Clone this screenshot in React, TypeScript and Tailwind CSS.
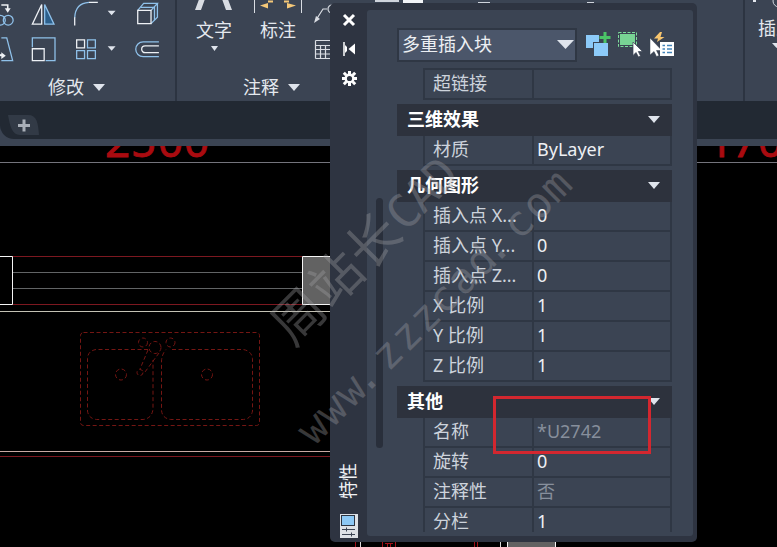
import type { ReactNode } from 'react'
import clsx from 'clsx'

interface Property {
  label: string
  value: string
  readOnly?: boolean
}

interface Section {
  title: string
  rows: Property[]
}

const sections: Section[] = [
  { title: '三维效果', rows: [{ label: '材质', value: 'ByLayer' }] },
  {
    title: '几何图形',
    rows: [
      { label: '插入点 X...', value: '0' },
      { label: '插入点 Y...', value: '0' },
      { label: '插入点 Z...', value: '0' },
      { label: 'X 比例', value: '1' },
      { label: 'Y 比例', value: '1' },
      { label: 'Z 比例', value: '1' },
    ],
  },
  {
    title: '其他',
    rows: [
      { label: '名称', value: '*U2742', readOnly: true },
      { label: '旋转', value: '0' },
      { label: '注释性', value: '否', readOnly: true },
      { label: '分栏', value: '1' },
    ],
  },
]

function Caret({ className }: { className?: string }) {
  return (
    <svg viewBox="0 0 12 7" preserveAspectRatio="none" className={clsx('shrink-0', className)}>
      <path d="M0 0H12L6 7Z" fill="#dfe4ec" />
    </svg>
  )
}

function PanelTitle({ children }: { children: ReactNode }) {
  return (
    <div className="flex h-7 items-center gap-[9px] text-[18px] text-[#e4e8ee]">
      {children}
      <Caret className="h-[7px] w-3" />
    </div>
  )
}

function ModifyTools() {
  return (
    <svg width="175" height="66" viewBox="0 0 175 66" fill="none" stroke="#8fc1ea" strokeWidth="1.3">
      {/* copy */}
      <circle cx="-1" cy="20.5" r="5" />
      <circle cx="7" cy="20.5" r="5" />
      <path d="M0 5h6.5v5" stroke="#eef1f5" strokeWidth="1.6" />
      <path d="M3.5 8.5h6l-3 4.5z" fill="#eef1f5" stroke="none" />
      {/* mirror */}
      <path d="M41 4.500V24.500H31.500Z" stroke="#eef1f5" />
      <path d="M44 4.500V24.500H53.500Z" fill="#2c5f8b" />
      {/* fillet */}
      <path d="M74.500 18C75 8 80 3 89 2.500" />
      <path d="M89 2.500H98M74.500 17.500V26" stroke="#eef1f5" />
      <path d="M108 11h8l-4 4.500zM108 47h8l-4 4.500z" fill="#dfe4ec" stroke="none" />
      {/* explode */}
      <path d="M138.500 10.500L144.500 3.500H158.500L152 10.500M158.500 3.500V17.500L152 24" />
      <path d="M141.500 7.500H155.500V20.500" />
      <path d="M138.500 10.500H152V24H138.500Z" stroke="#eef1f5" />
      {/* stretch */}
      <path d="M0 38.500H5.500L11.500 61.500H0" />
      <path d="M-2 56h4" stroke="#eef1f5" strokeWidth="2" />
      <path d="M0 53v7l4.500-3.500z" fill="#eef1f5" stroke="none" />
      {/* scale */}
      <path d="M31.500 48V38.500H54.500V61.500H45" />
      <path d="M31.500 49.500H43.500V61.500H31.500Z" stroke="#eef1f5" />
      {/* array */}
      <path d="M76.500 40.500H84.500V48.500H76.500Z" stroke="#eef1f5" />
      <path d="M87.500 40.500H95.500V48.500H87.500ZM76.500 51.500H84.500V59.500H76.500ZM87.500 51.500H95.500V59.500H87.500Z" />
      {/* offset */}
      <path d="M160 42.500H144a7.500 7.500 0 0 0 0 15H160" />
      <path d="M160 46.500H146a3.500 3.500 0 0 0 0 7H160" stroke="#eef1f5" />
    </svg>
  )
}

function Ribbon() {
  return (
    <div className="flex h-[101px] overflow-hidden bg-[#3b4453]">
      <div className="flex w-[175px] shrink-0 flex-col">
        <ModifyTools />
        <div className="mt-2 pl-12">
          <PanelTitle>修改</PanelTitle>
        </div>
      </div>
      <div className="w-[2px] shrink-0 bg-[#2c3441]" />
      <div className="flex w-[190px] shrink-0 flex-col pl-[19px]">
        <div className="flex h-[74px]">
          <div className="flex w-9 flex-col items-center text-[18px] text-[#e4e8ee]">
            <svg width="40" height="12" className="shrink-0">
              <path d="M1 10L7 -6H32L38 10H32L28 -1H11L7 10Z" fill="#d9dde3" />
              <path d="M11 -1H28L25 -9H14Z" fill="#d9dde3" />
            </svg>
            <span className="-mx-2 mt-1 leading-7">文字</span>
            <Caret className="mt-0.5 h-[5px] w-[7px]" />
          </div>
          <div className="ml-7 flex w-9 flex-col items-center text-[18px] text-[#e4e8ee]">
            <svg width="50" height="14" className="shrink-0">
              <path d="M1.500 0V13M48.500 0V13" stroke="#d9dde3" />
              <path d="M7 5.500L15 3V8.500ZM43 5.500L34 3V8.500Z" fill="#f5c878" />
              <path d="M15 1.500h5M31 1.500h5" stroke="#f5c878" strokeWidth="2" />
            </svg>
            <span className="mt-0.5 leading-7">标注</span>
          </div>
          <svg width="20" height="66" className="ml-[18px]" fill="none" stroke="#d9dde3" strokeWidth="1.200">
            <path d="M2 20L9 9H13" />
            <circle cx="18" cy="9" r="4" />
            <path d="M0 23l2-7 4 3z" fill="#d9dde3" stroke="none" />
            <path d="M1.500 40.500H20M1.500 45.500H20M1.500 49.500H20M1.500 54H20M1.500 58.500H20M1.500 40.500V58.500M6.500 45.500V58.500M11.500 45.500V58.500" />
          </svg>
        </div>
        <div className="pl-[47px]">
          <PanelTitle>注释</PanelTitle>
        </div>
      </div>
      <div className="flex flex-1">
        <svg width="230" height="8">
          <rect x="8" width="24" height="2" fill="#cfd4dc" />
          <rect x="36" width="20" height="3" fill="#f2f4f7" />
          <path d="M111 2.500H123M220 2.500H227" stroke="#cfd4dc" />
        </svg>
      </div>
      <div className="w-[2px] shrink-0 bg-[#2c3441]" />
      <div className="flex w-[32px] shrink-0 flex-col pl-[13px] text-[18px] text-[#e4e8ee]">
        <svg width="18" height="14" className="-ml-[6px] shrink-0 overflow-visible">
          <rect x="1" width="3" height="2" fill="#e4e8ee" />
          <circle cx="27" cy="1" r="6" fill="none" stroke="#cfd4dc" />
        </svg>
        <span className="w-9 leading-7">插入</span>
        <Caret className="ml-[14px] mt-px h-[5px] w-[9px]" />
      </div>
    </div>
  )
}

function FileTabs() {
  return (
    <div className="h-[45px] bg-[#3b4453]">
      <div className="flex h-[38px] items-center rounded-bl-[14px] bg-[#222933] pl-2">
        <svg width="32" height="22" className="mt-[9px]">
          <path d="M0 1H20C29 1 30 9 31 21H12C4 21 2 12 0 1Z" fill="#323a46" />
          <path d="M10 11.500H22M16 5.500V17.500" stroke="#a9afb8" strokeWidth="3" />
        </svg>
      </div>
    </div>
  )
}

function Drawing() {
  return (
    <svg width="777" height="401" viewBox="0 146 777 401" className="block bg-black" fill="none">
      <g fill="#a90b10" stroke="#a90b10" strokeWidth="0.8" fontSize="44" fontFamily="'Noto Sans', sans-serif">
        <text x="105 131 158 184" y="157">2500</text>
        <text x="708 732 758" y="157">170</text>
      </g>
      <path d="M0 162.500H777" stroke="#74747c" />

      {/* window in the wall */}
      <path d="M12 256.500H302M12 304.500H302M0 456.500H330" stroke="#7c1820" />
      <path d="M12 272.500H302M12 288.500H302" stroke="#626466" />
      <path d="M0 256.500H12.500V304.500H0" stroke="#f5f5f5" />
      <path d="M340 256.500H302.500V304.500H340" fill="#626262" stroke="#f5f5f5" />
      <path d="M0 311.500H330" stroke="#c3c1b4" />
      <path d="M0 451.500H330" stroke="#c9a9a4" />

      {/* sink */}
      <g stroke="#741613" strokeDasharray="4 2.500">
        <rect x="80.500" y="332.500" width="179" height="93" rx="3" />
        <path d="M148 349.500H96Q87.500 351 87.500 359V411Q88.500 418.500 96.500 419.500H143Q152 418.500 153 409V360" />
        <path d="M172 349.500H243Q252.500 351 252.500 360V411Q251 419.500 242 419.500H171Q162 418.500 161.500 410V361Q162 354 166 349.500" />
        <circle cx="121" cy="374.500" r="5.500" />
        <circle cx="207" cy="374.500" r="5.500" />
        <circle cx="143" cy="342.500" r="4.500" />
        <circle cx="170.500" cy="342.500" r="4.500" />
        <circle cx="155" cy="347.500" r="6" />
        <circle cx="140" cy="372.500" r="3" />
        <path d="M148 350L140 369M159 353L145 372" />
      </g>

      {/* geometry below the palette */}
      <path d="M355.500 540V547M382.500 540V547M395.500 540V547M385 543.500H393M387.500 543V547M390.500 543V547M474.500 540V547M477.500 540V547" stroke="#a01018" />
      <path d="M360.500 540V547M500.500 540V547" stroke="#d8d8d8" />
      <path d="M507.500 547V538H555.500V547" fill="#626262" stroke="#f5f5f5" />
    </svg>
  )
}

function PaletteBar() {
  return (
    <div className="flex w-[37px] shrink-0 flex-col items-center pb-[4px] pt-2">
      <svg width="18" height="80" className="mt-[2px]">
        <path d="M4 2L14 12M14 2L4 12" stroke="#fff" strokeWidth="3" />
        <path d="M4 29V43" stroke="#fff" strokeWidth="1.500" />
        <path d="M5 32L7 34V38L5 40Z" fill="#fff" />
        <path d="M15 30.500V41.500L8.500 36Z" fill="#fff" />
        <g stroke="#fff" fill="none">
          <circle cx="9.500" cy="65.500" r="3.800" strokeWidth="2.400" />
          <path d="M9.500 58V61M9.500 70V73M2 65.500H5M14 65.500H17M3.800 59.800L6.300 62.300M12.700 68.700L15.200 71.200M15.200 59.800L12.700 62.300M6.300 68.700L3.800 71.200" strokeWidth="3" />
        </g>
      </svg>
      <span className="mb-[15px] mr-[2px] mt-auto rotate-180 text-[18px] leading-6 text-[#f0f2f5] [text-orientation:sideways] [writing-mode:vertical-rl]">
        特性
      </span>
      <svg width="18" height="24">
        <rect width="18" height="24" fill="#dde1e6" />
        <rect x="1.500" y="1.500" width="13" height="10" fill="#8cc8f5" stroke="#2c3441" />
        <path d="M2 15.500H15M2 20.500H15M6.500 13.500V17.500M11.500 18.500V22.500" stroke="#3b4453" />
      </svg>
    </div>
  )
}

function PaletteToolbar() {
  return (
    <div className="flex h-[35px] shrink-0 items-center pl-[30px]">
      <div className="flex h-[34px] w-[180px] items-center justify-between border-2 border-[#2f3744] bg-[#4b566a] pl-[3px] pr-px text-[18px] text-[#eceff3]">
        多重插入块
        <Caret className="h-[9px] w-[17px]" />
      </div>
      <svg width="92" height="28" className="-mt-[3px] ml-[9px]">
        {/* toggle PICKADD */}
        <rect x="0" y="6" width="13" height="13" fill="#8ccaf8" />
        <rect x="7" y="13" width="15" height="15" fill="#3b4453" />
        <rect x="8" y="14" width="14" height="13" fill="#8ccaf8" />
        <path d="M19 3V14M13.500 8.500H24.500" stroke="#3b4453" strokeWidth="5" />
        <path d="M19 3V14M13.500 8.500H24.500" stroke="#4bc467" strokeWidth="3" />
        {/* select objects */}
        <rect x="32.500" y="3.500" width="18" height="14" fill="none" stroke="#7ddc9b" strokeDasharray="3 1.500" />
        <rect x="34" y="5" width="15" height="11" fill="#78d394" />
        <path d="M47 13V26.500L50 23.500L52.500 28L54.500 27L52.300 22.500H56.500Z" fill="#fff" stroke="#3b4453" strokeWidth="0.700" />
        {/* quick select */}
        <path d="M74 3L68 9.500H72L71 13L78.500 8H74.500L76 3Z" fill="#f7c56e" />
        <path d="M64 9V26L68 22.500L70.500 27.500L73 26.500L70.500 21.500H76Z" fill="#fff" stroke="#3b4453" strokeWidth="0.500" />
        <rect x="74" y="13" width="14" height="14" fill="#fff" />
        <path d="M76.500 16.500H79M81 16.500H86M76.500 20H79M81 20H86M76.500 23.500H79M81 23.500H86" stroke="#4384b9" strokeWidth="1.300" />
      </svg>
    </div>
  )
}

function PropertyRow({ label, value, readOnly }: Property) {
  return (
    <div className="ml-[26px] flex h-[30px] shrink-0 border-x-2 border-b-2 border-[#2f3744] text-[18px] leading-[26px]">
      <div className="w-[109px] shrink-0 whitespace-nowrap border-r-2 border-[#2f3744] pl-2 text-[#cdd3dc]">{label}</div>
      <div className={clsx('flex-1 pl-[3px]', readOnly ? 'text-[#878f9c]' : 'text-[#eef0f4]')}>{value}</div>
    </div>
  )
}

function PropertiesPalette() {
  return (
    <div className="absolute left-[330px] top-[3px] flex h-[539px] w-[367px] rounded-[5px] bg-[#2e3441]">
      <PaletteBar />
      <div className="mb-[6px] mr-1 mt-[7px] flex flex-1 flex-col overflow-hidden rounded-[3px] bg-[#3b4453] pt-[17px]">
        <PaletteToolbar />
        <div className="mb-1 mt-[6px] flex min-h-0 flex-1">
          <div className="ml-[9px] mt-[130px] h-[250px] w-[7px] rounded-full bg-[#292f3b]" />
          <div className="ml-[14px] flex w-[275px] flex-col overflow-hidden">
            <div className="ml-[26px] h-[2px] shrink-0 bg-[#2f3744]" />
            <PropertyRow label="超链接" value="" />
            {sections.map((section) => (
              <div key={section.title} className="mt-1 shrink-0">
                <div className="flex h-8 items-center justify-between bg-[#2d323d] pl-[10px] pr-3 text-[18px] font-bold text-white">
                  <span className="-mt-0.5">{section.title}</span>
                  <Caret className="-mt-0.5 h-[7px] w-3" />
                </div>
                {section.rows.map((row) => (
                  <PropertyRow key={row.label} {...row} />
                ))}
              </div>
            ))}
          </div>
        </div>
      </div>
    </div>
  )
}

function Watermark() {
  return (
    <svg
      width="777"
      height="547"
      className="pointer-events-none absolute left-0 top-0"
      fill="#a3a3a8"
      fillOpacity="0.34"
      fontFamily="'DejaVu Sans Mono', 'Noto Sans CJK SC', monospace"
      textAnchor="middle"
    >
      <g transform="translate(301 340) rotate(-45)">
        <text x="15 68 121" y="0" fontSize="52">周站长</text>
        <text x="163 189 215" y="-2" fontSize="46">CAD</text>
      </g>
      <text transform="translate(318 443) rotate(-45)" fontSize="42" x="7 33 60 79 112 139 165 191 218 244 263 297 324 350" y="0">
        www.zzzcad.com
      </text>
    </svg>
  )
}

export default function App() {
  return (
    <div className="relative h-[547px] w-[777px] overflow-hidden bg-black font-['Noto_Sans','Noto_Sans_CJK_SC',sans-serif]">
      <Ribbon />
      <FileTabs />
      <Drawing />
      <PropertiesPalette />
      <div className="absolute left-[493px] top-[396px] h-[58px] w-[158px] border-[3px] border-[#d3272f]" />
      <Watermark />
    </div>
  )
}
